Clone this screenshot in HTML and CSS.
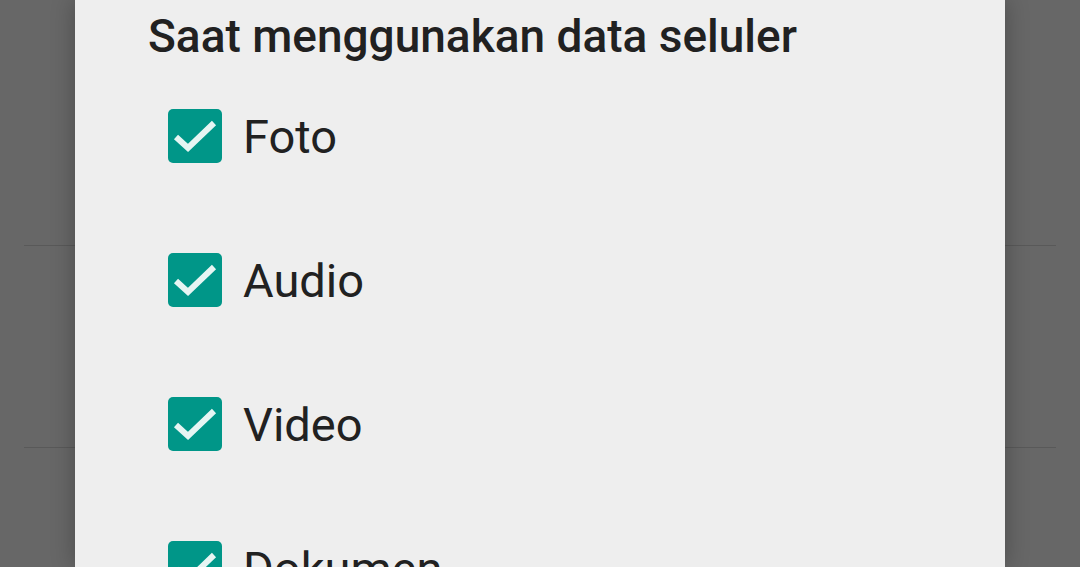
FILE: index.html
```html
<!DOCTYPE html>
<html lang="id">
<head>
    <meta charset="UTF-8">
    <meta name="viewport" content="width=device-width, initial-scale=1.0">
    <title>Unduh media otomatis</title>
    <link rel="stylesheet" href="styles.css">
</head>
<body>
    <div class="backdrop">
        <div class="bg-row"></div>
        <div class="bg-row"></div>
        <div class="bg-row"></div>
    </div>

    <div class="dialog">
        <h1 class="dialog-title">Saat menggunakan data seluler</h1>
        <ul class="options">
            <li class="option">
                <span class="check">
                    <svg viewBox="0 0 54 54"><polyline points="8,28 20,39 46,14"/></svg>
                </span>
                <span class="label">Foto</span>
            </li>
            <li class="option">
                <span class="check">
                    <svg viewBox="0 0 54 54"><polyline points="8,28 20,39 46,14"/></svg>
                </span>
                <span class="label">Audio</span>
            </li>
            <li class="option">
                <span class="check">
                    <svg viewBox="0 0 54 54"><polyline points="8,28 20,39 46,14"/></svg>
                </span>
                <span class="label">Video</span>
            </li>
            <li class="option">
                <span class="check">
                    <svg viewBox="0 0 54 54"><polyline points="8,28 20,39 46,14"/></svg>
                </span>
                <span class="label">Dokumen</span>
            </li>
        </ul>
    </div>
</body>
</html>
```

FILE: styles.css
```css
html, body {
    margin: 0;
    height: 100%;
    overflow: hidden;
}
body {
    background-color: #676767;
    font-family: Roboto, 'Noto Sans', sans-serif;
    position: relative;
}
.backdrop {
    padding: 44px 24px 0;
}
.bg-row {
    height: 201px;
    border-bottom: 1px solid #595959;
}
.dialog {
    position: absolute;
    top: 0;
    bottom: 0;
    left: 75px;
    width: 930px;
    background-color: #eeeeee;
    box-shadow: 0 0 22px rgba(0,0,0,0.28);
}
.dialog-title {
    margin: 0;
    padding: 9px 0 0 73px;
    font-size: 46px;
    line-height: 55px;
    font-weight: 500;
    color: #212121;
}
.options {
    list-style: none;
    margin: 0;
    padding: 0 0 0 93px;
}
.option {
    height: 144px;
    display: flex;
    align-items: center;
    gap: 21px;
}
.check {
    width: 54px;
    height: 54px;
    border-radius: 5px;
    background-color: #009688;
    display: flex;
}
.check svg {
    width: 54px;
    height: 54px;
    fill: none;
    stroke: #e6f5f3;
    stroke-width: 6;
}
.label {
    font-size: 47px;
    color: #212121;
}
```
